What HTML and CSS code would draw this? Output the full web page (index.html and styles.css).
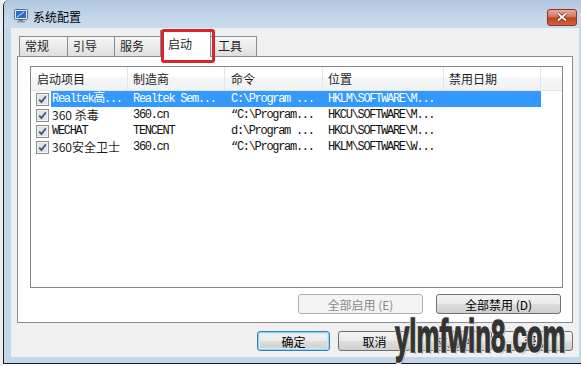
FILE: index.html
```html
<!DOCTYPE html>
<html lang="zh-CN">
<head>
  <meta charset="UTF-8">
  <title>系统配置</title>
  <link rel="stylesheet" href="styles.css">
</head>
<body>
  <svg class="defs" width="0" height="0">
    <symbol id="chk" viewBox="0 0 13 13">
      <rect x="0.5" y="0.5" width="12" height="12" fill="#f4f4f4" stroke="#8e8f8f"/>
      <rect x="2" y="2" width="9" height="9" fill="#dfe2e6"/>
      <path d="M3.2 6.6 L5.4 9 L9.8 3.4" fill="none" stroke="#4a5a86" stroke-width="1.9"/>
    </symbol>
  </svg>
  <div class="screen">
    <div class="desk"></div>
    <div class="window">
      <div class="titlebar">
        <svg class="app-icon" width="14" height="14" viewBox="0 0 14 14">
          <rect x="0.5" y="0.5" width="13" height="10" rx="1" fill="#e4eaf1" stroke="#5d6b7e"/>
          <rect x="2" y="2" width="10" height="7" fill="#2f6cc9"/>
          <path d="M3 8 L10 3" stroke="#bfe0ff" stroke-width="1"/>
          <rect x="5" y="11" width="4" height="1" fill="#6f7b8a"/>
          <rect x="3" y="12" width="8" height="1.5" fill="#8b96a3"/>
        </svg>
        <span class="title">系统配置</span>
        <div class="close">
          <svg width="12" height="10" viewBox="0 0 12 10">
            <path d="M2 1.5 L10 8.5 M10 1.5 L2 8.5" stroke="#6b2419" stroke-width="3.4"/>
            <path d="M2 1.5 L10 8.5 M10 1.5 L2 8.5" stroke="#fff" stroke-width="1.8"/>
          </svg>
        </div>
      </div>

      <div class="client">
        <div class="tabs">
          <div class="tab t1">常规</div>
          <div class="tab t2">引导</div>
          <div class="tab t3">服务</div>
          <div class="tab active">启动</div>
          <div class="tab last">工具</div>
        </div>

        <div class="panel">
          <div class="listview">
            <div class="lv-head">
              <span class="hcell c1">启动项目</span>
              <span class="hcell c2">制造商</span>
              <span class="hcell c3">命令</span>
              <span class="hcell c4">位置</span>
              <span class="hcell c5">禁用日期</span>
              <span class="hcell filler"></span>
            </div>

            <div class="lv-row selected">
              <svg class="check" width="13" height="13"><use href="#chk"/></svg>
              <div class="cells">
                <span class="cell c1 mono">Realtek高...</span>
                <span class="cell c2 mono">Realtek Sem...</span>
                <span class="cell c3 mono">C:\Program ...</span>
                <span class="cell c4 mono">HKLM\SOFTWARE\M...</span>
                <span class="cell c5"></span>
              </div>
            </div>
            <div class="lv-row">
              <svg class="check" width="13" height="13"><use href="#chk"/></svg>
              <div class="cells">
                <span class="cell c1">360 杀毒</span>
                <span class="cell c2 mono">360.cn</span>
                <span class="cell c3 mono">“C:\Program...</span>
                <span class="cell c4 mono">HKCU\SOFTWARE\M...</span>
                <span class="cell c5"></span>
              </div>
            </div>
            <div class="lv-row">
              <svg class="check" width="13" height="13"><use href="#chk"/></svg>
              <div class="cells">
                <span class="cell c1 mono">WECHAT</span>
                <span class="cell c2 mono">TENCENT</span>
                <span class="cell c3 mono">d:\Program ...</span>
                <span class="cell c4 mono">HKCU\SOFTWARE\M...</span>
                <span class="cell c5"></span>
              </div>
            </div>
            <div class="lv-row">
              <svg class="check" width="13" height="13"><use href="#chk"/></svg>
              <div class="cells">
                <span class="cell c1">360安全卫士</span>
                <span class="cell c2 mono">360.cn</span>
                <span class="cell c3 mono">“C:\Program...</span>
                <span class="cell c4 mono">HKLM\SOFTWARE\W...</span>
                <span class="cell c5"></span>
              </div>
            </div>
          </div>

          <div class="panel-buttons">
            <button class="btn wide" disabled>全部启用 (E)</button>
            <button class="btn wide">全部禁用 (D)</button>
          </div>
        </div>

        <div class="dialog-buttons">
          <button class="btn default">确定</button>
          <button class="btn">取消</button>
          <button class="btn">应用(A)</button>
          <button class="btn">帮助</button>
        </div>
      </div>
    </div>
    <div class="watermark">ylmfwin8.com</div>
  </div>
</body>
</html>
```

FILE: styles.css
```css
*,
*::before,
*::after {
  box-sizing: border-box;
}
body {
  margin: 0;
  background: #fff;
  font-family: "Noto Sans CJK SC", "Noto Sans", sans-serif;
  font-size: 12px;
  color: #1e1e1e;
}
.defs {
  position: absolute;
}
.screen {
  display: flex;
  width: 581px;
  height: 366px;
  position: relative;
  overflow: hidden;
}
.desk {
  width: 3px;
  background: #eeeeee;
}
.window {
  flex: 1;
  height: 364px;
  display: flex;
  flex-direction: column;
  border-left: 1px solid #1c1c1c;
  border-bottom: 1px solid #1c1c1c;
  border-top-left-radius: 6px;
  background: #c3d6ec;
  padding-bottom: 6px;
}

/* title bar */
.titlebar {
  height: 28px;
  display: flex;
  align-items: center;
  padding: 6px 4px 0 10px;
  background: linear-gradient(#afc5de, #c2d5ea 55%, #cadbee);
  border-top-left-radius: 6px;
}
.app-icon {
  margin-top: -2px;
}
.title {
  margin-left: 5px;
  margin-top: -2px;
  color: #000;
}
.close {
  margin-left: auto;
  width: 30px;
  height: 17px;
  border: 1px solid #8b3326;
  border-radius: 3px;
  background: linear-gradient(#e9ab9c, #d87561 45%, #c0431f 52%, #d35f3e);
  display: flex;
  align-items: center;
  justify-content: center;
}

/* client */
.client {
  flex: 1;
  margin: 0 2px 0 7px;
  background: #f0f0f0;
  padding: 8px 6px 0 6px;
  display: flex;
  flex-direction: column;
}
.tabs {
  display: flex;
  align-items: flex-end;
  height: 20px;
  margin-left: 2px;
}
.tab {
  height: 20px;
  line-height: 18px;
  padding-left: 5px;
  border-top: 1px solid #898c95;
  border-left: 1px solid #898c95;
  background: linear-gradient(#f6f6f6, #ebebeb 50%, #dedede);
  color: #1e1e1e;
}
.t1 {
  width: 48px;
}
.t2,
.t3 {
  width: 47px;
}
.tab.active {
  position: relative;
  z-index: 2;
  width: 51px;
  height: 27px;
  margin: 0 -2px -1px -1px;
  padding: 4px 0 0 7px;
  border-right: 1px solid #898c95;
  background: #fff;
}
.tab.active::after {
  content: "";
  position: absolute;
  left: 0;
  top: -2px;
  width: 54px;
  height: 34px;
  border: 3px solid #d7262b;
  border-radius: 3px;
}
.tab.last {
  width: 48px;
  padding-left: 8px;
  border-right: 1px solid #898c95;
}

.panel {
  height: 267px;
  border: 1px solid #898c95;
  background: #fff;
  padding: 9px 9px 8px 12px;
  display: flex;
  flex-direction: column;
}

/* list view */
.listview {
  height: 222px;
  border: 1px solid #828790;
  background: #fff;
}
.lv-head {
  display: flex;
  height: 24px;
  border-bottom: 1px solid #e2e4e7;
  background: linear-gradient(#ffffff, #ffffff 45%, #f5f6f7 46%, #f1f2f4);
}
.hcell {
  padding: 3px 0 0 6px;
  line-height: 18px;
  border-right: 1px solid #e3e5e8;
  color: #1e1e1e;
}
.hcell.c1 {
  width: 97px;
}
.hcell.c2 {
  width: 97px;
  padding-left: 5px;
}
.hcell.c3 {
  width: 98px;
}
.hcell.c4 {
  width: 121px;
  padding-left: 5px;
}
.hcell.c5 {
  width: 97px;
  padding-left: 5px;
}
.hcell.filler {
  flex: 1;
  border-right: 0;
}

.lv-row {
  display: flex;
  align-items: center;
  height: 16px;
}
.check {
  margin: 0 2px 0 5px;
  flex: none;
}
.cells {
  display: flex;
  height: 16px;
}
.lv-row.selected .cells {
  background: #3399ff;
  color: #fff;
}
.cell {
  line-height: 16px;
  white-space: nowrap;
  overflow: hidden;
  padding-left: 5px;
  color: inherit;
}
.cell.c1 {
  width: 77px;
  padding-left: 1px;
}
.cell.c2 {
  width: 97px;
}
.cell.c3 {
  width: 98px;
  padding-left: 6px;
}
.cell.c4 {
  width: 121px;
}
.cell.c5 {
  width: 97px;
}
.mono {
  font-family: "Liberation Mono", "Noto Sans CJK SC", monospace;
  font-size: 12px;
  letter-spacing: -1.3px;
  color: #111;
}
.lv-row.selected .mono {
  color: #fff;
}

/* buttons */
.btn {
  width: 73px;
  height: 20px;
  padding: 0;
  border: 1px solid #707070;
  border-radius: 3px;
  background: linear-gradient(#f3f3f3, #ebebeb 48%, #dddddd 52%, #cfcfcf);
  font-family: "Noto Sans CJK SC", sans-serif;
  font-size: 12px;
  line-height: 17px;
  color: #000;
}
.btn.wide {
  width: 125px;
}
.btn:disabled {
  border-color: #adb2b5;
  background: #f4f4f4;
  color: #8a8a8a;
}
.btn.default {
  border-color: #3c7fb1;
  box-shadow: inset 0 0 0 1px #8fd3f5, inset 0 0 0 2px #cdeaf8;
}
.panel-buttons {
  margin-top: 6px;
  display: flex;
  justify-content: flex-end;
  gap: 13px;
  padding-right: 2px;
}
.dialog-buttons {
  margin-top: 8px;
  display: flex;
  justify-content: flex-end;
  gap: 8px;
}

.watermark {
  position: absolute;
  left: 395px;
  top: 318px;
  font-family: "Liberation Sans", sans-serif;
  font-weight: bold;
  font-size: 46px;
  line-height: 36px;
  color: #333;
  -webkit-text-stroke: 1.6px #333;
  transform: scaleX(0.56);
  transform-origin: left top;
  white-space: nowrap;
  text-shadow: 2px 0 0 #f4f4f4, -2px 0 0 #f4f4f4, 0 2px 0 #f4f4f4, 0 -2px 0 #f4f4f4, 2px 2px 1px #9a9a9a;
}
```
